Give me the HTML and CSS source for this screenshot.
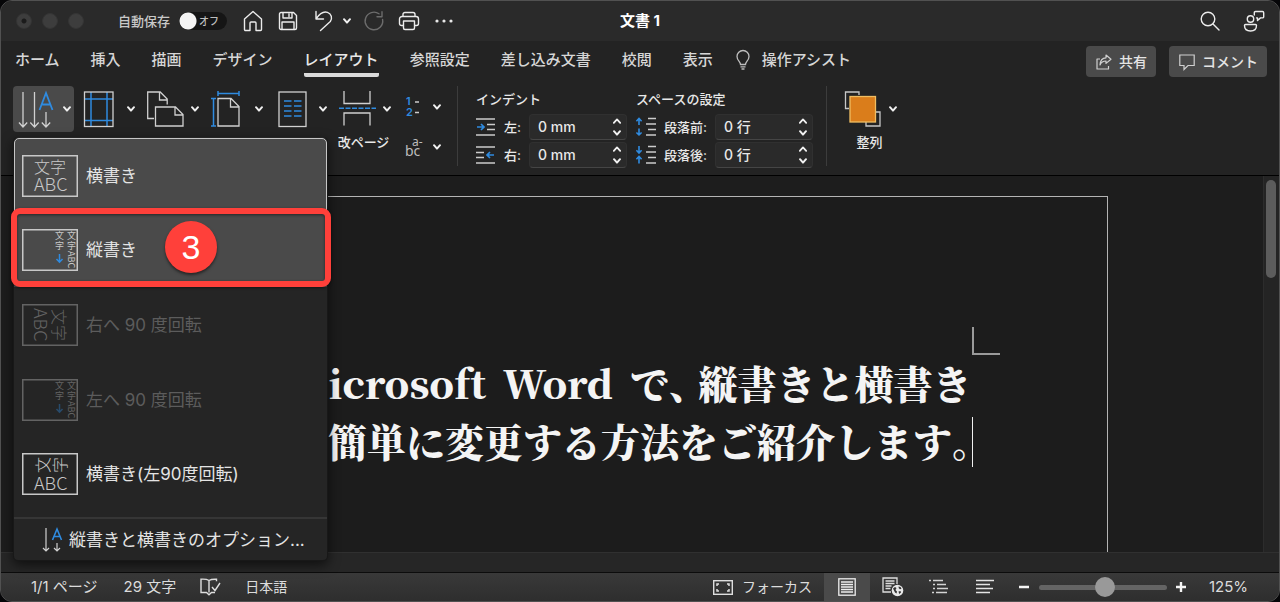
FILE: index.html
```html
<!DOCTYPE html>
<html lang="ja">
<head>
<meta charset="utf-8">
<title>文書 1</title>
<link rel="stylesheet" href="styles.css">
</head>
<body>
<svg class="defs" aria-hidden="true">
  <symbol id="chev" viewBox="0 0 10 8"><path d="M2 2.2l3 3.4 3-3.4" fill="none" stroke="#f0f0f0" stroke-width="2" stroke-linecap="round" stroke-linejoin="round"/></symbol>
  <symbol id="chev-up" viewBox="0 0 10 8"><path d="M1.8 5.8L5 2.4l3.2 3.4" fill="none" stroke="#f0f0f0" stroke-width="1.8" stroke-linecap="round" stroke-linejoin="round"/></symbol>
</svg>
<div class="window">
  <header class="titlebar">
    <div class="title-left">
      <div class="lights"><i class="light light-edited"></i><i class="light"></i><i class="light"></i></div>
      <label class="autosave">自動保存
        <span class="switch"><input type="checkbox" class="switch-input"><span class="switch-text">オフ</span></span>
      </label>
      <button class="icon-btn home" aria-label="ホーム"><svg width="20" height="22" viewBox="0 0 20 22" class="line"><path d="M1.500 9L10 1.500 18.500 9v10.500a1 1 0 0 1-1 1H13v-7.500a1 1 0 0 0-1-1H8a1 1 0 0 0-1 1v7.500H2.500a1 1 0 0 1-1-1z"/></svg></button>
      <button class="icon-btn save" aria-label="保存"><svg width="20" height="20" viewBox="0 0 20 20" class="line"><path d="M1.500 3A1.500 1.500 0 0 1 3 1.500h12.500l3 3V17a1.500 1.500 0 0 1-1.500 1.500H3A1.500 1.500 0 0 1 1.500 17zM5 1.500v5.500h9V1.500M11 3v2.500M4 18.500V11h12v7.500"/></svg></button>
      <button class="icon-btn undo" aria-label="元に戻す"><svg width="20" height="22" viewBox="0 0 20 22" class="line"><path d="M2 1.500v7.500h7.500M2.300 8.500C5 4.500 9 .8 13.500 2.300c4 1.500 5.200 6 2.800 9.200L6.500 20.500"/></svg></button>
      <button class="icon-btn more" aria-label="元に戻す履歴"><svg width="10" height="8"><use href="#chev"/></svg></button>
      <button class="icon-btn redo" aria-label="繰り返し"><svg width="20" height="20" viewBox="0 0 20 20" class="line dim"><path d="M15 2.800A8.800 8.800 0 1 0 18.600 8.500M18 .8v5h-5"/></svg></button>
      <button class="icon-btn print" aria-label="印刷"><svg width="22" height="20" viewBox="0 0 22 20" class="line"><path d="M5.500 14.500H3.500a2 2 0 0 1-2-2V8a2.500 2.500 0 0 1 2.500-2.500h14A2.500 2.500 0 0 1 20.500 8v4.500a2 2 0 0 1-2 2h-2M5 5.500V3.500a2 2 0 0 1 2-2h8a2 2 0 0 1 2 2v2M5.500 10h11v7a1.500 1.500 0 0 1-1.500 1.500H7A1.500 1.500 0 0 1 5.500 17z"/></svg></button>
      <button class="icon-btn dots" aria-label="その他"><svg width="20" height="6" viewBox="0 0 20 6" fill="#e8e8e8"><circle cx="3" cy="3" r="1.600"/><circle cx="10" cy="3" r="1.600"/><circle cx="17" cy="3" r="1.600"/></svg></button>
    </div>
    <h1 class="doc-title">文書 1</h1>
    <div class="title-right">
      <button class="icon-btn" aria-label="検索"><svg width="20" height="20" viewBox="0 0 20 20" class="line"><circle cx="8" cy="8" r="6.800"/><path d="M13 13l6 6"/></svg></button>
      <button class="icon-btn" aria-label="共同編集"><svg width="22" height="22" viewBox="0 0 22 22" class="line"><circle cx="7.500" cy="9" r="3.200"/><path d="M2.500 14.500h10a1 1 0 0 1 1 1c0 3.500-2.500 5.500-6 5.500s-6-2-6-5.500a1 1 0 0 1 1-1zM11.300 5V2.700a1.200 1.200 0 0 1 1.200-1.200h7a1.200 1.200 0 0 1 1.200 1.200v4a1.200 1.200 0 0 1-1.200 1.200h-2L14.500 10.500V7.900h-1"/></svg></button>
    </div>
  </header>

  <div class="ribbon">
    <div class="tabbar">
      <nav class="tabs">
        <button class="tab">ホーム</button><button class="tab">挿入</button><button class="tab">描画</button><button class="tab">デザイン</button><button class="tab tab-active">レイアウト</button><button class="tab">参照設定</button><button class="tab">差し込み文書</button><button class="tab">校閲</button><button class="tab">表示</button>
      </nav>
      <button class="tab assist"><svg width="14" height="20" viewBox="0 0 14 20" fill="none" stroke="#bdbdbd" stroke-width="1.300"><path d="M4.500 14.500c0-3-3.500-4-3.500-8a6 6 0 0 1 12 0c0 4-3.500 5-3.500 8zM4.500 16.800h5M5.500 19h3"/></svg>操作アシスト</button>
      <div class="actions">
        <button class="action"><svg width="16" height="16" viewBox="0 0 16 16" fill="none" stroke="#d0d0d0" stroke-width="1.200" stroke-linejoin="round"><path d="M4 5H1v10h11.500v-3M10 1l5 4.200-5 4.200V7C7 7 5 8.500 4 11c.2-4 2.500-7 6-7.200z"/></svg>共有</button>
        <button class="action"><svg width="16" height="16" viewBox="0 0 16 16" fill="none" stroke="#d0d0d0" stroke-width="1.200"><path d="M.8 1h14.400v10.500H9l-4 4v-4H.8z"/></svg>コメント</button>
      </div>
    </div>

    <div class="tools">
      <div class="tool-group">
        <div class="anchor">
          <button class="tool tool-open" aria-label="文字列の方向"><span class="tool-face"><svg width="38" height="40" viewBox="0 0 38 40" fill="none" stroke="#d0d0d0" stroke-width="1.300"><path d="M4 3v35M0 33.500L4 38l4.200-4.500M15.500 3v35M11.300 33.500l4.200 4.500 4.200-4.500M27 23v15M22.800 33.500L27 38l4.200-4.500"/><path d="M20.500 21L27 4l6.500 17M22.500 15.500h9" stroke="#2f8be0" stroke-width="1.800"/></svg><svg width="10" height="8"><use href="#chev"/></svg></span></button>

          <div class="menu">
            <button class="item item-focus">
              <svg class="thumb" viewBox="0 0 56 42"><rect class="frame" x=".75" y=".75" width="54.500" height="40.500"/><text x="12" y="18" class="g16">文字</text><text x="12" y="36" class="g18">ABC</text></svg>横書き</button>
            <div class="marked">
              <button class="item item-hover">
                <svg class="thumb" viewBox="0 0 56 42"><rect class="frame" x=".75" y=".75" width="54.500" height="40.500"/><text x="33" y="10" class="g9">文</text><text x="33" y="20" class="g9">字</text><text x="45" y="10" class="g9">文</text><text x="45" y="20" class="g9">字</text><text transform="translate(46 22) rotate(90)" class="g9">ABC</text><path class="arrow" d="M37.500 25v8M34.500 30l3 3.200 3-3.200"/></svg>縦書き</button>
              <div class="callout"></div>
              <div class="badge">3</div>
            </div>
            <button class="item" disabled>
              <svg class="thumb" viewBox="0 0 56 42"><rect class="frame" x=".75" y=".75" width="54.500" height="40.500"/><text transform="translate(31 5) rotate(90)" class="g16">文字</text><text transform="translate(12 4) rotate(90)" class="g18">ABC</text></svg>右へ 90 度回転</button>
            <button class="item" disabled>
              <svg class="thumb" viewBox="0 0 56 42"><rect class="frame" x=".75" y=".75" width="54.500" height="40.500"/><text x="33" y="10" class="g9">文</text><text x="33" y="20" class="g9">字</text><text x="45" y="10" class="g9">文</text><text x="45" y="20" class="g9">字</text><text transform="translate(46 22) rotate(90)" class="g9">ABC</text><path class="arrow" d="M37.500 25v8M34.500 30l3 3.200 3-3.200"/></svg>左へ 90 度回転</button>
            <button class="item">
              <svg class="thumb" viewBox="0 0 56 42"><rect class="frame" x=".75" y=".75" width="54.500" height="40.500"/><text transform="translate(27 20) rotate(-90)" class="g16">文</text><text transform="translate(44 20) rotate(-90)" class="g16">字</text><text x="12" y="37" class="g18">ABC</text></svg>横書き(左90度回転)</button>
            <button class="item-options"><svg width="22" height="26" viewBox="0 0 22 26" fill="none" stroke="#d0d0d0" stroke-width="1.200"><path d="M4 1v23M1 21l3 3 3-3M15 16v8M12 21l3 3 3-3"/><path d="M10.500 13L15 2l4.500 11M12 9.500h6" stroke="#2f8be0" stroke-width="1.600"/></svg>縦書きと横書きのオプション...</button>
          </div>
        </div>
        <button class="tool" aria-label="余白"><span class="tool-face"><svg width="38" height="40" viewBox="0 0 38 40" fill="none" stroke="#d0d0d0" stroke-width="1.300"><path d="M8 3v34M24 3v34M2 10h28M2 31.500h28" stroke="#2f8be0" stroke-width="1.500"/><rect x="1.500" y="3" width="28.500" height="34.500"/></svg><svg width="10" height="8"><use href="#chev"/></svg></span></button>
        <button class="tool" aria-label="印刷の向き"><span class="tool-face"><svg width="38" height="40" viewBox="0 0 38 40" fill="none" stroke="#d0d0d0" stroke-width="1.300"><path d="M7 29.500H0.700V3h12.500l7 7v5.500M12.500 3v8h8M8.500 18h20l7.500 7.500V37H8.500zM28 18v8h8"/></svg><svg width="10" height="8"><use href="#chev"/></svg></span></button>
        <button class="tool" aria-label="サイズ"><span class="tool-face"><svg width="38" height="40" viewBox="0 0 38 40" fill="none" stroke="#d0d0d0" stroke-width="1.300"><path d="M7 9.500h13l8 8V37H7zM19.500 9.500v8.500h8"/><path d="M7 4.500h21M7 2v5M28 2v5M2.500 9.500V37M0 9.500h5M0 37h5" stroke="#2f8be0" stroke-width="1.500"/></svg><svg width="10" height="8"><use href="#chev"/></svg></span></button>
        <button class="tool" aria-label="段組み"><span class="tool-face"><svg width="38" height="40" viewBox="0 0 38 40" fill="none" stroke="#d0d0d0" stroke-width="1.300"><rect x="4" y="3" width="27" height="34.500"/><path d="M9 12h7.500M19 12h7.500M9 17h7.500M19 17h7.500M9 22h7.500M19 22h7.500M9 27h7.500M19 27h7.500" stroke="#2f8be0" stroke-width="1.600"/></svg><svg width="10" height="8"><use href="#chev"/></svg></span></button>
        <button class="tool"><span class="tool-face"><svg width="38" height="40" viewBox="0 0 38 40" fill="none" stroke="#d0d0d0" stroke-width="1.300"><path d="M5 2v12.500h26V2M5 36.500V24h26v12.500"/><path d="M0 19.300h37" stroke="#2f8be0" stroke-width="1.600" stroke-dasharray="5 1.500"/></svg><svg width="10" height="8"><use href="#chev"/></svg></span>改ページ</button>
      </div>
      <div class="mini-tools">
        <button class="mini" aria-label="行番号"><svg width="22" height="26" viewBox="0 0 22 26"><text x="1" y="11" class="num">1</text><text x="1" y="22" class="num">2</text><path d="M10 8h4M10 18.500h4" stroke="#ccc" stroke-width="1.300"/></svg><svg width="10" height="8"><use href="#chev"/></svg></button>
        <button class="mini" aria-label="ハイフネーション"><svg width="22" height="26" viewBox="0 0 22 26"><text x="7" y="12" class="hyph">a-</text><text x="0" y="22" class="hyph hyph-big">bc</text></svg><svg width="10" height="8"><use href="#chev"/></svg></button>
      </div>
      <div class="rule"></div>
      <fieldset class="fields">
        <legend class="legend">インデント</legend>
        <div class="field"><svg width="20" height="18" viewBox="0 0 20 18" fill="none" stroke="#ccc" stroke-width="1.300"><path d="M0 1h19M11 6.500h8M11 11.500h8M0 17h19"/><path d="M1 9h7M5 6l3 3-3 3" stroke="#2f8be0" stroke-width="1.700"/></svg><label for="ind-l">左:</label><span class="spin"><input id="ind-l" class="spin-input" type="text" value="0 mm"><span class="spin-btns"><button aria-label="増やす"><svg width="10" height="8"><use href="#chev-up"/></svg></button><button aria-label="減らす"><svg width="10" height="8"><use href="#chev"/></svg></button></span></span></div>
        <div class="field"><svg width="20" height="18" viewBox="0 0 20 18" fill="none" stroke="#ccc" stroke-width="1.300"><path d="M0 1h19M0 6.500h8M0 11.500h8M0 17h19"/><path d="M18 9h-7M14 6l-3 3 3 3" stroke="#2f8be0" stroke-width="1.700"/></svg><label for="ind-r">右:</label><span class="spin"><input id="ind-r" class="spin-input" type="text" value="0 mm"><span class="spin-btns"><button aria-label="増やす"><svg width="10" height="8"><use href="#chev-up"/></svg></button><button aria-label="減らす"><svg width="10" height="8"><use href="#chev"/></svg></button></span></span></div>
      </fieldset>
      <fieldset class="fields">
        <legend class="legend">スペースの設定</legend>
        <div class="field"><svg width="20" height="20" viewBox="0 0 20 20" fill="none" stroke="#ccc" stroke-width="1.300"><path d="M12 1.500h8M10 7h10M12 12.500h8M10 18h10"/><path d="M3 8V1.500M.4 4.200L3 1.500l2.600 2.700M3 11.500V18M.4 15.500L3 18l2.600-2.500" stroke="#2f8be0" stroke-width="1.600"/></svg><label for="sp-b">段落前:</label><span class="spin"><input id="sp-b" class="spin-input" type="text" value="0 行"><span class="spin-btns"><button aria-label="増やす"><svg width="10" height="8"><use href="#chev-up"/></svg></button><button aria-label="減らす"><svg width="10" height="8"><use href="#chev"/></svg></button></span></span></div>
        <div class="field"><svg width="20" height="20" viewBox="0 0 20 20" fill="none" stroke="#ccc" stroke-width="1.300"><path d="M12 1.500h8M10 7h10M12 12.500h8M10 18h10"/><path d="M3 1v7M.4 5.300L3 8l2.600-2.700M3 18.500v-7M.4 14.200L3 11.500l2.600 2.700" stroke="#2f8be0" stroke-width="1.600"/></svg><label for="sp-a">段落後:</label><span class="spin"><input id="sp-a" class="spin-input" type="text" value="0 行"><span class="spin-btns"><button aria-label="増やす"><svg width="10" height="8"><use href="#chev-up"/></svg></button><button aria-label="減らす"><svg width="10" height="8"><use href="#chev"/></svg></button></span></span></div>
      </fieldset>
      <div class="rule"></div>
      <button class="tool tool-arrange"><span class="tool-face"><svg width="38" height="40" viewBox="0 0 38 40" fill="none" stroke="#c8c8c8" stroke-width="1.300"><path d="M5 19.500H1.500V3H15v3M31 23h5v14H22v-4"/><rect x="6" y="7.500" width="25.500" height="25.500" fill="#da7d1b" stroke="#f0bd62"/></svg><svg width="10" height="8"><use href="#chev"/></svg></span>整列</button>
    </div>
  </div>

  <main class="workspace">
    <div class="canvas">
      <article class="page">
        <div class="copy">
          <span class="corner"></span>
          <p class="line-text"><span>Microsoft</span> <span>Word</span> <span>で<span class="half comma">、</span>縦書きと横書き</span></p>
          <p class="line-text"><span>を簡単に変更する方法をご紹介します<span class="half">。</span></span></p>
          <span class="caret"></span>
        </div>
      </article>
    </div>
    <div class="scrollbar"><div class="scroll-thumb"></div></div>
  </main>
  <div class="hscroll"></div>

  <footer class="statusbar">
    <span class="st-num">1/1 ページ</span>
    <span class="st-num st-count">29 文字</span>
    <button class="icon-btn st-proof" aria-label="文章校正"><svg width="21" height="18" viewBox="0 0 21 18" fill="none" stroke="#dedede" stroke-width="1.400"><path d="M9 14.500V2.500C7 1.200 4 1 1 1.200v13.300h5.500L9 16.800l2.500-2.300H15M9 2.500c1.500-1 3.500-1.300 6-1.300h1.500v2M12 9l3 3.500L20 5"/></svg></button>
    <button class="st-text">日本語</button>
    <button class="st-text st-focus"><svg width="20" height="15" viewBox="0 0 20 15" fill="none" stroke="#dedede" stroke-width="1.400"><rect x=".7" y=".7" width="18.600" height="13.600"/><path d="M4 6V4h2M14 4h2v2M4 9v2h2M14 11h2V9" stroke-width="1.500"/></svg>フォーカス</button>
    <div class="views">
      <button class="view view-active" aria-label="印刷レイアウト"><svg width="18" height="18" viewBox="0 0 18 18" fill="none" stroke="#eee" stroke-width="1.300"><rect x=".8" y=".8" width="16.400" height="16.400"/><path d="M3 4h12M3 6.500h12M3 9h12M3 11.500h12M3 14h12"/></svg></button>
      <button class="view" aria-label="Web レイアウト"><svg width="22" height="20" viewBox="0 0 22 20" fill="none" stroke="#ddd" stroke-width="1.300"><path d="M9 15H1V1h14v6M3.500 4h9M3.500 6.500h9M3.500 9h6M3.500 11.500h5"/><circle cx="15.500" cy="13.500" r="5.800" fill="#e8e8e8" stroke="none"/><path d="M11 11.500l2-1.500 1.500 1-1 2 1.500 1.500-.5 2-1.500-1zM16.500 9.500l2 .5 1 1.800-1.500.5-1.200-1zM16.500 14.500l2-.5.5 1.500-1.800 1.500z" fill="#333" stroke="none"/></svg></button>
      <button class="view" aria-label="アウトライン"><svg width="20" height="16" viewBox="0 0 20 16" fill="none" stroke="#d4d4d4" stroke-width="1.500"><path d="M0 1.500h2M4 1.500h10M4 5.500h2M8 5.500h9M4 9.500h2M8 9.500h11M3 13.500h2M7 13.500h11"/></svg></button>
      <button class="view" aria-label="下書き"><svg width="20" height="16" viewBox="0 0 20 16" fill="none" stroke="#e4e4e4" stroke-width="1.600"><path d="M1 1.500h18M1 5.500h14M1 9.500h17M1 13.500h14"/></svg></button>
    </div>
    <button class="icon-btn zoom-out" aria-label="縮小"><svg width="12" height="12" viewBox="0 0 12 12"><path d="M1 6h10" stroke="#f4f4f4" stroke-width="2.600"/></svg></button>
    <input class="zoom" type="range" min="10" max="240" value="130" aria-label="ズーム">
    <button class="icon-btn zoom-in" aria-label="拡大"><svg width="12" height="12" viewBox="0 0 12 12"><path d="M1 6h10M6 1v10" stroke="#f4f4f4" stroke-width="2.400"/></svg></button>
    <span class="st-num st-zoom">125%</span>
  </footer>
</div>
</body>
</html>
```
FILE: styles.css
```css
* { box-sizing: border-box; }
html, body { height: 100%; }
body {
  margin: 0;
  background: #060608;
  color: #e2e2e2;
  font: 500 15px/20px Inter, "Noto Sans CJK JP", sans-serif;
}
button, input { font: inherit; color: inherit; }
button {
  display: flex;
  align-items: center;
  justify-content: center;
  padding: 0;
  border: 0;
  background: none;
  white-space: nowrap;
}
svg { display: block; flex: none; overflow: visible; }
.defs { position: absolute; width: 0; height: 0; }
.line { fill: none; stroke: #ececec; stroke-width: 1.4; stroke-linejoin: round; stroke-linecap: round; }
.dim { stroke: #6c6c6c; }

.window {
  display: flex;
  flex-direction: column;
  height: 100vh;
  border: 1px solid #515151;
  border-radius: 12px;
  overflow: hidden;
  background: #232323;
}

/* Title bar */
.titlebar {
  display: grid;
  grid-template-columns: 1fr auto 1fr;
  align-items: center;
  height: 40px;
  background: #2a2a2a;
}
.title-left { display: flex; align-items: center; padding-left: 15px; }
.lights { display: flex; gap: 10px; }
.light { width: 16px; height: 16px; border-radius: 50%; background: #3d3d3d; border: 1px solid #353535; }
.light-edited { background: radial-gradient(circle, #1b1b1b 2px, #3d3d3d 3px); }
.autosave { display: flex; align-items: center; gap: 9px; margin-left: 34px; font-size: 13px; color: #c9c9c9; }
.switch { display: grid; align-items: center; }
.switch-input {
  grid-area: 1 / 1;
  appearance: none;
  width: 48px;
  height: 18px;
  margin: 0;
  border-radius: 9px;
  background: radial-gradient(circle at 9px 9px, #f4f4f4 8px, #151515 9px);
}
.switch-text { grid-area: 1 / 1; padding-left: 20px; font-size: 10px; color: #bdbdbd; }
.home { margin-left: 16px; }
.save { margin-left: 15px; }
.undo { margin-left: 16px; }
.more { margin-left: 8px; }
.redo { margin-left: 12px; }
.print { margin-left: 14px; }
.dots { margin-left: 14px; }
.doc-title { margin: 0; font-size: 15px; line-height: 20px; font-weight: 700; color: #fff; }
.title-right { display: flex; justify-content: flex-end; gap: 23px; padding-right: 14px; }

/* Ribbon */
.ribbon { border-bottom: 1px solid #000; }
.tabbar { display: flex; align-items: center; height: 39px; padding: 0 12px 0 14px; }
.tabs { display: flex; gap: 31px; }
.tab { height: 30px; margin-top: 3px; border-bottom: 4px solid transparent; color: #d6d6d6; }
.tab-active { border-bottom-color: #dadada; border-radius: 2px; color: #e8e8e8; }
.assist { gap: 12px; margin-left: 23px; }
.actions { display: flex; gap: 13px; margin-left: auto; padding-top: 2px; }
.action { gap: 7px; height: 31px; padding: 0 9px 0 10px; border-radius: 4px; background: #4a4a4a; font-size: 14px; color: #e4e4e4; }
.tools { display: flex; align-items: flex-start; height: 95px; padding: 6px 12px 8px; }
.tool-group { display: flex; align-items: flex-start; gap: 3px; }
.anchor { position: relative; }
.tool { flex-direction: column; justify-content: flex-start; width: 61px; font-size: 13px; line-height: 20px; color: #e8e8e8; }
.tool-face { display: flex; align-items: center; justify-content: space-between; width: 100%; height: 46px; padding: 0 2px 0 6px; }
.tool-open { background: #4a4a4a; border-radius: 4px; }
.mini-tools { display: flex; flex-direction: column; gap: 14px; padding: 8px 0 0 11px; }
.mini { gap: 5px; }
.num { font: 600 11px Inter, sans-serif; fill: #2f8be0; }
.hyph { font: 400 12px "Noto Sans", sans-serif; fill: #bdbdbd; }
.hyph-big { font-size: 14px; }
.rule { width: 1px; height: 80px; margin: 0 18px 0 15px; background: #3c3c3c; }
.fields { display: flex; flex-direction: column; gap: 2px; min-width: 0; margin: 0 9px 0 0; padding: 0; border: 0; font-size: 13px; }
.legend { padding: 0 0 2px; line-height: 26px; color: #e8e8e8; }
.field { display: flex; align-items: center; gap: 8px; height: 26px; color: #e8e8e8; }
.spin { display: flex; width: 98px; height: 26px; border-radius: 4px; background: #2a2a2a; border: 1px solid #303030; border-bottom-color: #454545; }
.spin-input { flex: 1; min-width: 0; padding: 0 0 0 8px; border: 0; background: none; font-size: 14px; }
.spin-btns { display: flex; flex-direction: column; justify-content: center; gap: 4px; width: 17px; }
.fields + .rule { margin: 0 12px 0 4px; }
.tool-arrange .tool-face { justify-content: flex-start; gap: 6px; padding-left: 5px; }

/* Text direction menu */
.menu {
  position: absolute;
  z-index: 2;
  top: 51px;
  left: 0;
  width: 315px;
  padding-top: 1px;
  border: 1px solid #181818;
  border-top: 0;
  border-radius: 5px;
  background: #252525;
  box-shadow: 0 4px 12px rgba(0, 0, 0, .6);
}
.item { justify-content: flex-start; gap: 8px; width: 100%; height: 74px; padding: 0 8px; font-size: 17px; font-weight: 400; color: #e4e4e4; }
.item:disabled { height: 75px; color: #5c5c5c; }
.item-focus { height: 75px; padding: 0 7px; border: 1px solid #c6c6c6; border-radius: 5px 5px 0 0; background: #4a4a4a; }
.item-hover { background: #4a4a4a; }
.thumb { width: 56px; height: 42px; fill: #c8c8c8; font-family: "Noto Sans CJK JP", sans-serif; font-weight: 300; }
.frame { fill: none; stroke: #c8c8c8; stroke-width: 1.5; }
.arrow { fill: none; stroke: #2f8be0; stroke-width: 1.5; }
.item:disabled .thumb { opacity: .38; }
.g16 { font-size: 16px; }
.g18 { font-size: 18px; }
.g9 { font-size: 9px; font-weight: 400; }
.item-options { justify-content: flex-start; gap: 5px; width: 100%; height: 43px; margin-top: 6px; padding-left: 28px; border-top: 2px solid #363636; font-size: 17px; font-weight: 400; color: #e4e4e4; }
.marked { position: relative; }
.callout { position: absolute; inset: -5px -4px 0 -3px; border: 6px solid #ff403a; border-radius: 9px; box-shadow: 0 1px 3px rgba(0, 0, 0, .5), inset 0 1px 3px rgba(0, 0, 0, .5); }
.badge { position: absolute; top: 8px; left: 151px; width: 52px; height: 52px; border-radius: 50%; background: #ff403a; box-shadow: 0 2px 3px rgba(0, 0, 0, .5); color: #fff; font: 400 34px/52px "Liberation Sans", sans-serif; text-align: center; }

/* Document */
.workspace { display: flex; flex: 1; min-height: 0; background: #1d1d1d; }
.canvas { flex: 1; padding: 20px 155px 0 152px; }
.page { height: 100%; padding: 156px 135px 0 135px; border: 1px solid #b4b4b4; border-bottom: 0; background: #1c1c1c; }
.copy { position: relative; }
.line-text { display: flex; justify-content: space-between; margin: 0; font: 900 39px/58px "Noto Serif CJK JP", "Noto Sans CJK JP", serif; color: #f4f4f4; white-space: nowrap; }
.half { font-feature-settings: "halt"; }
.comma { padding-right: 10px; }
.corner { position: absolute; left: 100%; bottom: calc(100% - 2px); width: 28px; height: 28px; border: solid #9a9a9a; border-width: 0 0 2px 2px; }
.caret { position: absolute; left: 100%; bottom: 2px; width: 1px; height: 50px; background: #f0f0f0; }
.scrollbar { display: flex; justify-content: center; width: 19px; padding-top: 4px; background: #242424; border-left: 1px solid #2c2c2c; }
.scroll-thumb { width: 10px; height: 98px; border-radius: 5px; background: #5c5c5c; }
.hscroll { height: 20px; background: #262626; border-top: 1px solid #303030; }

/* Status bar */
.statusbar { display: flex; align-items: center; height: 29px; padding: 0 31px 0 30px; border-top: 1px solid #0c0c0c; background: linear-gradient(#393939, #2e2e2e); font-size: 14px; font-weight: 400; color: #dcdcdc; }
.st-num { font-size: 15px; }
.st-count { margin-left: 26px; }
.st-proof { margin-left: 24px; }
.st-proof + .st-text { margin-left: 24px; }
.st-focus { gap: 9px; margin-left: auto; }
.views { display: flex; align-self: stretch; margin-left: 12px; }
.view { width: 46px; }
.view-active { background: #4a4a4a; }
.zoom-out { margin-left: 10px; }
.zoom { appearance: none; width: 128px; height: 20px; margin: 0 8px 0 9px; background: none; }
.zoom::-webkit-slider-runnable-track { height: 5px; border-radius: 3px; background: #646464; }
.zoom::-webkit-slider-thumb { appearance: none; width: 20px; height: 20px; margin-top: -8px; border-radius: 50%; background: #999; }
.st-zoom { margin-left: 22px; }
```
